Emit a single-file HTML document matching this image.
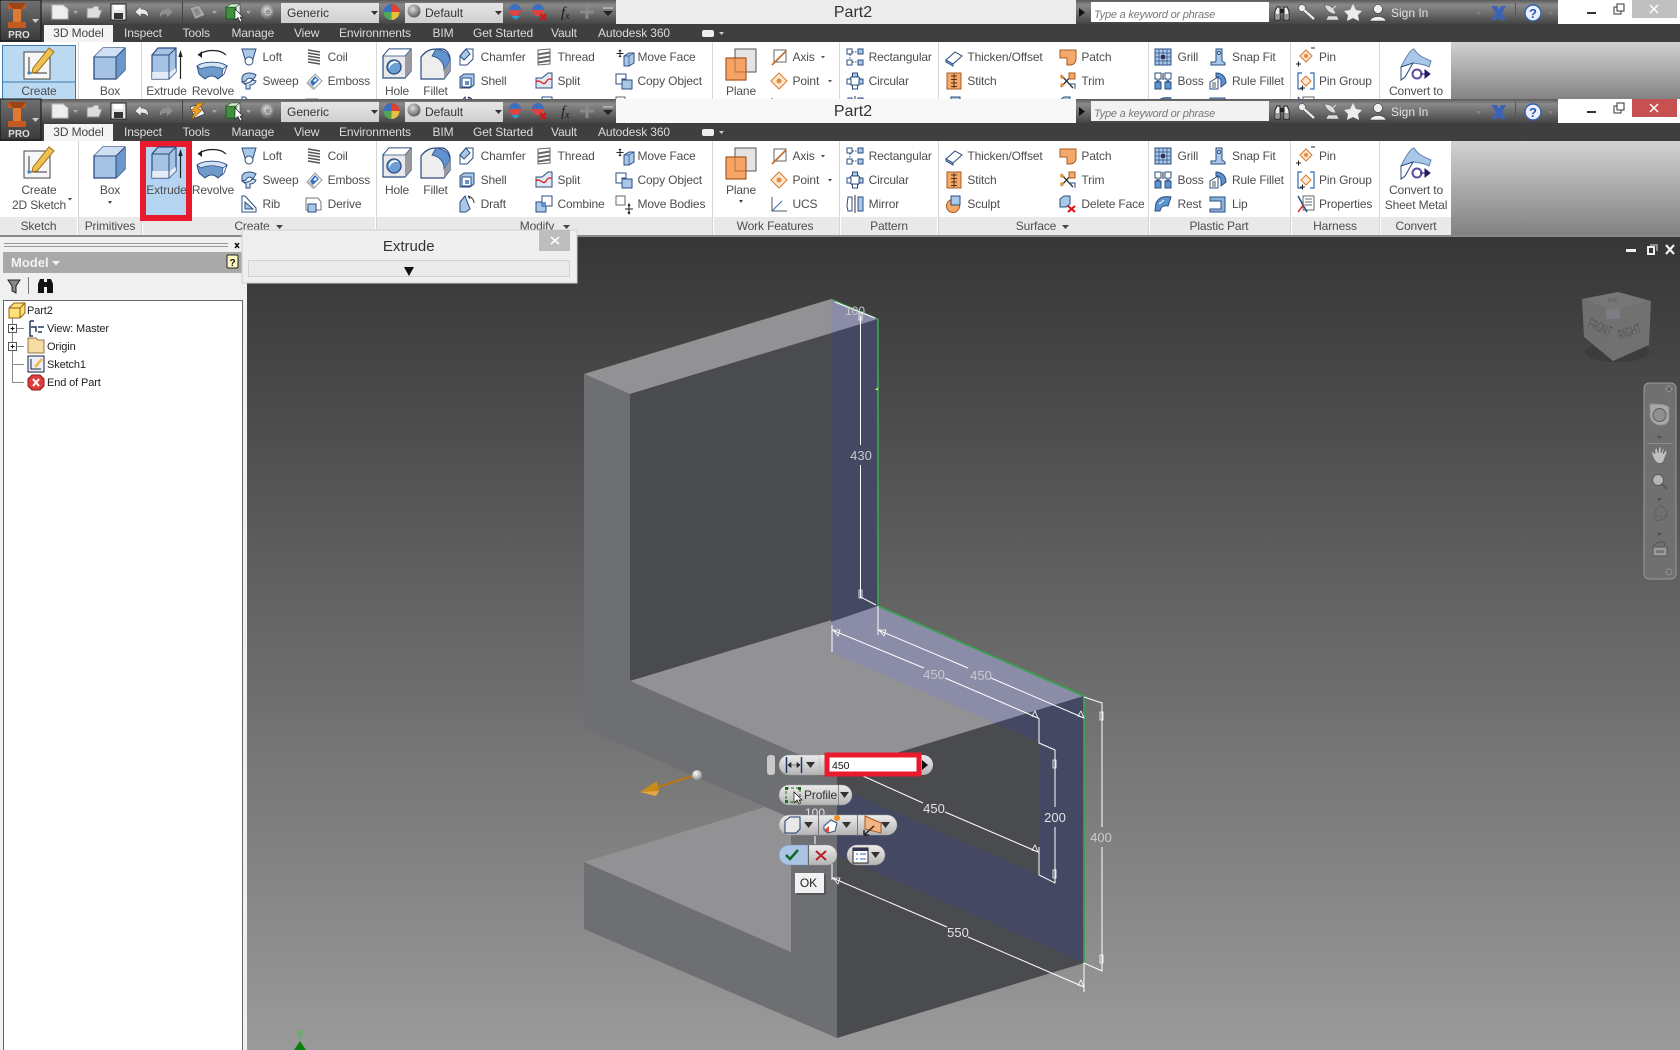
<!DOCTYPE html>
<html><head><meta charset="utf-8"><title>Part2</title>
<style>
html,body{margin:0;padding:0;background:#fff;overflow:hidden}
svg{display:block;font-family:"Liberation Sans",sans-serif}
.r text{font-size:12px;fill:#4d4d4d;letter-spacing:-.14px}
.c text{text-anchor:middle}
.tab text{font-size:12px;fill:#dcdcdc;letter-spacing:-.12px}
.dim text{font-size:13px;fill:#c9c9cf;text-anchor:middle}
.tree text{font-size:11px;fill:#222;letter-spacing:-.12px}
</style></head><body>
<svg xmlns="http://www.w3.org/2000/svg" width="1680" height="1050" viewBox="0 0 1680 1050">
<defs>
<linearGradient id="tbg" x1="0" y1="0" x2="0" y2="1"><stop offset="0" stop-color="#5a5a5a"/><stop offset=".2" stop-color="#8a8a8a"/><stop offset=".6" stop-color="#686868"/><stop offset="1" stop-color="#444"/></linearGradient>
<linearGradient id="rg" x1="0" y1="0" x2="0" y2="1"><stop offset="0" stop-color="#d2d2d2"/><stop offset="1" stop-color="#828282"/></linearGradient>
<linearGradient id="vp" x1="0" y1="0" x2="0" y2="1"><stop offset="0" stop-color="#363636"/><stop offset="1" stop-color="#9a9a9a"/></linearGradient>
<linearGradient id="pill" x1="0" y1="0" x2="0" y2="1"><stop offset="0" stop-color="#ececec"/><stop offset="1" stop-color="#b4b4b4"/></linearGradient>
<linearGradient id="cb" x1="0" y1="0" x2="0" y2="1"><stop offset="0" stop-color="#e6e6e6"/><stop offset="1" stop-color="#cfcfcf"/></linearGradient>
<linearGradient id="logo" x1="0" y1="0" x2="0" y2="1"><stop offset="0" stop-color="#707070"/><stop offset="1" stop-color="#3a3a3a"/></linearGradient>
<radialGradient id="ball" cx=".4" cy=".35" r=".7"><stop offset="0" stop-color="#fff"/><stop offset="1" stop-color="#888"/></radialGradient>
<radialGradient id="sph" cx=".4" cy=".35" r=".7"><stop offset="0" stop-color="#ddd"/><stop offset="1" stop-color="#555"/></radialGradient>

<g id="loft"><path d="M-7-8H7L4 2H-4Z" fill="#a9c8e8" stroke="#2b4c80"/><circle cy="4" r="4" fill="#fff" stroke="#2b4c80"/></g>
<g id="sweep"><path d="M-7-4C-5-9 3-9 7-6L4-1C2-4-2-3-3 0L-7 1Z" fill="#a9c8e8" stroke="#2b4c80"/><path d="M-7 1C-3 4 2 1 3-1L7 0C6 3 3 4 1 4V8H-3V4Z" fill="#cfe0f2" stroke="#2b4c80"/></g>
<g id="coil" fill="none" stroke="#555" stroke-width="1.600"><path d="M-6-7 6-5M-6-4 6-2M-6-1 6 1M-6 2 6 4M-6 5 6 7"/></g>
<g id="emboss"><path d="M-7 2 1-7 8 0 0 8Z" fill="#fff" stroke="#999"/><path d="M-4 1 1-5 5-1-1 5Z" fill="#2f6fc0"/><path d="M-1 0 2-3 3-1 1 1Z" fill="#fff"/><path d="M-7 3-1 9 2 8-5 1Z" fill="#b5b5b5"/></g>
<g id="chamfer"><path d="M-7-1-1-8H6V2L0 8H-7Z" fill="#fff" stroke="#2b4c80"/><path d="M-7-1-1-8 3-3-3 3Z" fill="#a9c8e8" stroke="#2b4c80"/></g>
<g id="shell"><path d="M-7-4-3-7H7V4L3 7H-7Z" fill="#a9c8e8" stroke="#2b4c80"/><rect x="-5" y="-3" width="9" height="9" fill="#fff" stroke="#2b4c80"/><rect x="-2" y="0" width="4" height="4" fill="#5e8fc6"/></g>
<g id="thread" fill="#fff" stroke="#666"><path d="M-6-7 6-8V-5L-6-3ZM-6-2 6-4V-1L-6 1ZM-6 2 6 0V3L-6 5ZM-6 6 6 4V7L-6 8Z"/></g>
<g id="split"><path d="M-8-3-2-3 4-8H8V7H-8Z" fill="#dfe8f2" stroke="#2b4c80"/><path d="M-8 1C-4-3-1 6 2 1S6-1 8-2" fill="none" stroke="#d22" stroke-width="1.300"/></g>
<g id="moveface"><path d="M-2-2 3-5H8V5L3 8H-2Z" fill="#a9c8e8" stroke="#2b4c80"/><path d="M-2-2H3V8M3-2 8-5" fill="none" stroke="#2b4c80" stroke-width=".7"/><path d="M-6-8V-1M-9.500-4.500H-2.500M-6-8-7.200-6.800M-6-8-4.800-6.800M-6-1-7.200-2.200M-6-1-4.800-2.200" stroke="#222" fill="none" stroke-width=".9"/></g>
<g id="copyobj"><path d="M-8-7H2V-2H-2V3H-8Z" fill="#fff" stroke="#2b4c80"/><rect x="-2" y="-1" width="10" height="9" fill="#a9c8e8" stroke="#2b4c80"/></g>
<g id="axis"><path d="M-5-7H7V5H-5Z" fill="#fff" stroke="#666"/><path d="M-7 8 7-6" stroke="#c46a2a" stroke-width="1.600"/></g>
<g id="point"><path d="M0-8 8 0 0 8-8 0Z" fill="#fde7d2" stroke="#d8792a"/><circle r="2.500" fill="#e68a3c"/></g>
<g id="rectp" fill="#fff" stroke="#2b4c80"><path d="M-5-5H5M-5 5H5M-5-5V5" fill="none" stroke-dasharray="1.500 1"/><rect x="-8" y="-8" width="5" height="5"/><rect x="3" y="-8" width="5" height="5" fill="#a9c8e8"/><rect x="-8" y="3" width="5" height="5"/><rect x="3" y="3" width="5" height="5" fill="#a9c8e8"/></g>
<g id="circ" fill="#a9c8e8" stroke="#2b4c80"><circle r="5.500" fill="none"/><rect x="-2.500" y="-8" width="5" height="4"/><rect x="-8" y="-2" width="4" height="5" fill="#fff"/><rect x="4" y="-2" width="4" height="5"/><rect x="-2.500" y="4" width="5" height="4" fill="#fff"/></g>
<g id="thicken"><path d="M-8 2 1-6 8-2-1 6Z" fill="#fff" stroke="#2b4c80"/><path d="M-8 2-1 6V8L-8 4Z" fill="#8cb2da" stroke="#2b4c80"/></g>
<g id="stitch"><rect x="-7" y="-8" width="14" height="16" fill="#f3a96a" stroke="#a85a20"/><path d="M0-7V7M-3-5H3M-3-1.500H3M-3 2H3M-3 5.500H3" stroke="#5a3410"/></g>
<g id="patch"><path d="M-8-7H8V2C8 6 5 8 2 8H-1V1H-8Z" fill="#f3a96a" stroke="#a85a20"/></g>
<g id="trim"><path d="M-7 6 5-7M-7-6 5 7" stroke="#333" stroke-width="1.300"/><rect x="1" y="-8" width="6" height="6" fill="#f3a96a" stroke="#a85a20"/><circle cx="-6" cy="-4" r="1.800" fill="#e8902a"/><circle cx="-6" cy="4" r="1.800" fill="#e8902a"/><path d="M1 3H7V8" fill="none" stroke="#2b4c80"/></g>
<g id="grill"><rect x="-8" y="-8" width="16" height="16" fill="#a9c8e8" stroke="#2b4c80"/><path d="M-4-8V8M0-8V8M4-8V8M-8-4H8M-8 0H8M-8 4H8" stroke="#2b4c80" stroke-width=".7"/><rect x="-2" y="-2" width="4" height="4" fill="#335"/></g>
<g id="boss"><path d="M-8 1H-2V8H-8ZM2 1H8V8H2Z" fill="#5d94d0" stroke="#2b4c80"/><path d="M-8-8H-2V-2H-4V0H-6V-2H-8ZM2-8H8V-2H6V0H4V-2H2Z" fill="#fff" stroke="#2b4c80"/><path d="M0-8V-1" stroke="#222"/></g>
<g id="snap"><path d="M-2-8H4V4L7 6V8H-7V5H-3C-2 5-2 4-2 3Z" fill="#a9c8e8" stroke="#2b4c80"/><circle cx="1" cy="-4" r="1.500" fill="#fff" stroke="#2b4c80"/></g>
<g id="rulefillet"><path d="M-2-8C4-8 8-4 8 2L3 6V0C3-2 1-4-2-4Z" fill="#5d94d0" stroke="#2b4c80"/><path d="M-8 1 0-4V8H-8Z" fill="#fff" stroke="#2b4c80"/><path d="M-6 2H-2M-6 4H-2M-6 6H-2" stroke="#555"/></g>
<g id="pin"><path d="M0-6 6 0 0 6-6 0Z" fill="#fde7d2" stroke="#d8792a"/><circle r="2" fill="#e68a3c"/><path d="M-10 8H-5M-7.500 5.500V10.500M5-8H9" stroke="#222"/></g>
<g id="pingroup"><path d="M0-5 5 0 0 5-5 0Z" fill="#fde7d2" stroke="#d8792a"/><path d="M-4-8H-8V8H-4M4-8H8V8H4" fill="none" stroke="#2b6cb0" stroke-width="1.200"/><path d="M-6 7H-1M-3.500 4.500V9.500" stroke="#222"/></g>
<g id="rib"><path d="M-7-8-4-8 7 4V8H-7Z" fill="#fff" stroke="#2b4c80"/><path d="M-4-2 4 5H-4Z" fill="#a9c8e8" stroke="#2b4c80"/></g>
<g id="derive"><path d="M-8-6H4L7-2V6H-8Z" fill="#fff" stroke="#777"/><rect x="-6" y="0" width="8" height="8" fill="#a9c8e8" stroke="#2b4c80"/></g>
<g id="draft"><path d="M-7-2-2-8 3 5-1 8H-7Z" fill="#a9c8e8" stroke="#2b4c80"/><path d="M1-8C5-7 7-4 7-1M1-8 3-5" fill="none" stroke="#333"/></g>
<g id="combine"><rect x="-8" y="-2" width="10" height="10" fill="#a9c8e8" stroke="#2b4c80"/><rect x="-2" y="-8" width="10" height="10" fill="#fff" stroke="#2b4c80"/><rect x="-2" y="-2" width="4" height="4" fill="#5d94d0"/></g>
<g id="movebodies"><rect x="-8" y="-8" width="9" height="9" fill="#fff" stroke="#666"/><path d="M5 1V9M1 5H9" stroke="#222"/><path d="M4 2 5 0 6 2M4 8 5 10 6 8" fill="none" stroke="#222"/></g>
<g id="ucs" fill="none" stroke="#555"><path d="M-7-7V7H8"/><path d="M-7 7 3-3" stroke="#2b6cb0"/></g>
<g id="mirror"><path d="M-7-7H-3V7H-7L-8 2Z" fill="#fff" stroke="#2b4c80"/><path d="M0-9V9" stroke="#333"/><path d="M8-7H3V7H8V-1Z" fill="#a9c8e8" stroke="#2b4c80"/></g>
<g id="sculpt"><circle cx="-1" cy="2" r="6.500" fill="#f3a96a" stroke="#a85a20"/><path d="M-3-8H6V1H-3Z" fill="#a9c8e8" stroke="#2b4c80"/></g>
<g id="delface"><path d="M-8-5-4-8H2V0L-2 3H-8Z" fill="#a9c8e8" stroke="#2b4c80"/><path d="M0 2 7 8M7 2 0 8" stroke="#d11" stroke-width="2"/></g>
<g id="rest"><path d="M-7-1C-4-7 2-8 8-7L5 2C0 1-2 3-3 7H-8Z" fill="#5d94d0" stroke="#2b4c80"/><path d="M-4 0 1-4" stroke="#fff"/></g>
<g id="lip"><path d="M-8-7H7V8H-8V5H3V-3H-8Z" fill="#8cb2da" stroke="#2b4c80"/></g>
<g id="props"><rect x="-3" y="-8" width="11" height="14" fill="#fff" stroke="#666"/><path d="M-1-5H6M-1-2H6M-1 1H6" stroke="#667"/><path d="M-8-8 1 8" stroke="#2b4c80" stroke-width="1.500"/><path d="M-8 8-2 0" stroke="#d33" stroke-width="1.500"/></g>

<g id="big">
 <g transform="translate(24,48)"><rect x="0" y="4" width="26" height="27" fill="#f7f7f7" stroke="#444"/><path d="M5 9V25H23" fill="none" stroke="#333"/><rect x="3.500" y="23.500" width="3" height="3" fill="#3a8ad0"/><path d="M9 20 25 0 30 4 13 24 8 25Z" fill="#eec251" stroke="#a8701a"/></g>
 <g transform="translate(94,48)"><path d="M0 9 9 0H31V22L22 31H0Z" fill="#a6c3e4" stroke="#2b4c80" stroke-width="1.300"/><path d="M22 9 31 0V22L22 31Z" fill="#6c97c8"/><path d="M0 9 9 0H31L22 9Z" fill="#cfe0f2"/><path d="M0 9H22V31M22 9 31 0" fill="none" stroke="#2b4c80"/></g>
 <g transform="translate(152,48)"><path d="M0 7 6 0H24V24L17 31H0Z" fill="#a6c3e4" stroke="#2b4c80" stroke-width="1.200"/><path d="M0 24H18L24 20V24L17 31H0Z" fill="#fff" opacity=".7"/><path d="M0 7H17V31M17 7 24 0" fill="none" stroke="#2b4c80"/><path d="M28.500 31V7" stroke="#222" stroke-width="1.200"/><path d="M26.300 9 28.500 2 30.700 9Z" fill="#222"/></g>
 <g transform="translate(196,49)"><path d="M2 6C10 0 24 0 30 6" fill="none" stroke="#222" stroke-width="1.200"/><path d="M2 6 6 2 6 9Z" fill="#222"/><path d="M1 17C8 12 24 12 31 17L28 25 22 30C18 26 13 26 9 30L3 25Z" fill="#6f9bcc" stroke="#2b4c80"/><path d="M1 17C8 12 24 12 31 17L27 20C20 17 11 17 5 20Z" fill="#d3e3f4" stroke="#2b4c80" stroke-width=".7"/><path d="M27 20 31 17 28 25 26 27Z" fill="#fff" stroke="#2b4c80" stroke-width=".7"/></g>
 <g transform="translate(383,49)"><path d="M0 7 6 0H28V22L22 29H0Z" fill="#e9e9ec" stroke="#2b4c80" stroke-width="1.200"/><path d="M22 7 28 0V22L22 29Z" fill="#9a9aa0"/><path d="M0 7 6 0H28L22 7Z" fill="#fff" stroke="#2b4c80" stroke-width=".7"/><circle cx="11" cy="18" r="7" fill="#6d9ed4" stroke="#2b4c80" stroke-width="1.300"/><path d="M6 20A6 6 0 0 1 16 14 8 8 0 0 0 6 20Z" fill="#fff"/></g>
 <g transform="translate(421,49)"><path d="M0 8C6 0 12 0 16 0H22C26 1 29 6 29 10V22L23 30H0Z" fill="#eee" stroke="#2b4c80" stroke-width="1.200"/><path d="M15 0C24 1 29 6 29 12L23 21C23 14 19 9 11 7Z" fill="#5f92cf" stroke="#2b4c80" stroke-width=".8"/><path d="M23 21 29 12V22L23 30Z" fill="#9a9aa0"/></g>
 <g transform="translate(726,49)"><path d="M9 0H30V23H9Z" fill="#e4e4e6" stroke="#555"/><path d="M0 9H20V31H0Z" fill="#f5a468" stroke="#a85a20" stroke-width="1.200"/><path d="M9 9V23H20" fill="none" stroke="#a85a20" stroke-width=".7"/></g>
 <g transform="translate(1401,49)"><path d="M0 18C5 8 10 0 13 0 18 8 24 9 30 12L28 18C24 15 18 15 12 14L9 19 4 28 0 31Z" fill="#a9c8e8" stroke="#5d80ad"/><path d="M0 18 12 14 4 28 0 31Z" fill="#fff" stroke="#2b4c80"/><circle cx="16" cy="25" r="4.500" fill="none" stroke="#5a4ca0" stroke-width="2"/><path d="M19 25H26M24 21 29 25 24 29Z" fill="#221a60" stroke="#221a60"/></g>
 <use href="#loft" x="249" y="57"/><use href="#coil" x="314" y="57"/><use href="#chamfer" x="467" y="57"/><use href="#thread" x="544" y="57"/><use href="#moveface" x="626" y="58"/><use href="#axis" x="779" y="57"/><use href="#rectp" x="855" y="57"/><use href="#thicken" x="954" y="58"/><use href="#patch" x="1068" y="57"/><use href="#grill" x="1163" y="57"/><use href="#snap" x="1218" y="57"/><use href="#pin" x="1306" y="56"/>
 <use href="#sweep" x="249" y="81"/><use href="#emboss" x="314" y="81"/><use href="#shell" x="467" y="81"/><use href="#split" x="544" y="81"/><use href="#copyobj" x="624" y="81"/><use href="#point" x="779" y="81"/><use href="#circ" x="855" y="81"/><use href="#stitch" x="954" y="81"/><use href="#trim" x="1068" y="81"/><use href="#boss" x="1163" y="81"/><use href="#rulefillet" x="1218" y="81"/><use href="#pingroup" x="1306" y="81"/>
 <use href="#rib" x="249" y="105"/><use href="#derive" x="314" y="105"/><use href="#draft" x="467" y="105"/><use href="#combine" x="544" y="105"/><use href="#movebodies" x="624" y="105"/><use href="#ucs" x="779" y="105"/><use href="#mirror" x="855" y="105"/><use href="#sculpt" x="954" y="105"/><use href="#delface" x="1068" y="105"/><use href="#rest" x="1163" y="105"/><use href="#lip" x="1218" y="105"/><use href="#props" x="1306" y="105"/>
</g>

<g id="qat">
 <rect x="0" y="0" width="41" height="41" fill="url(#logo)" stroke="#111"/>
 <path d="M8 3H26V9H21V22H26V28H8V22H13V9H8Z" fill="#c35a20"/><path d="M13 9H21V22H13Z" fill="#e07a30"/><path d="M8 3 13 9H21L26 3Z" fill="#9c4416"/>
 <path d="M32 19H39L35.500 23Z" fill="#ccc"/>
 <path d="M52 5H63L68 9V19H52Z" fill="#eee" stroke="#bbb"/><path d="M73 11H78L75.500 14Z" fill="#aaa"/>
 <path d="M87 18V8H92L94 6H99V10H102L99 18Z" fill="#ddd" stroke="#888"/>
 <rect x="111" y="4" width="15" height="16" fill="#e6e6e6" stroke="#222"/><rect x="114" y="13" width="9" height="6" fill="#333"/><rect x="114" y="5" width="9" height="5" fill="#fff"/>
 <path d="M135 12 141 6V9C146 9 149 12 148 17 146 14 144 14 141 14V17Z" fill="#e8e8e8" stroke="#444" stroke-width=".5"/>
 <path d="M173 12 167 6V9C162 9 159 12 160 17 162 14 164 14 167 14V17Z" fill="#8f8f8f"/>
 <path d="M182.500 1V23" stroke="#444"/>
 <path d="M212 11H217L214.500 14Z" fill="#aaa"/>
 <path d="M226 7 231 4H240V16L236 19H226Z" fill="#eee" stroke="#444" stroke-width=".6"/><path d="M226 7H236V19H226Z" fill="#3e8f3e" stroke="#1e5a1e"/><path d="M226 7 231 4H240L236 7Z" fill="#dfe8df" stroke="#1e5a1e" stroke-width=".6"/><path d="M235 9V20L238 17.500 240 22 242 21 240 17H243Z" fill="#fff" stroke="#111" stroke-width=".6"/>
 <path d="M246 11H251L248.500 14Z" fill="#aaa"/>
 <circle cx="268" cy="12" r="7.500" fill="url(#sph)"/><circle cx="268" cy="12" r="3" fill="#999" stroke="#eee" stroke-dasharray="1 1"/>
 <rect x="281" y="3" width="98" height="20" fill="url(#cb)"/><path d="M371 11H378L374.500 15Z" fill="#333"/>
 <circle cx="391.500" cy="12" r="8" fill="#3a6fc0"/><path d="M391.500 12V4A8 8 0 0 1 399.500 12Z" fill="#e04030"/><path d="M391.500 12H399.500A8 8 0 0 1 391.500 20Z" fill="#e8c040"/><path d="M391.500 12V20A8 8 0 0 1 383.500 12Z" fill="#50a850"/>
 <rect x="405" y="3" width="98" height="20" fill="url(#cb)"/><circle cx="414" cy="11" r="6.500" fill="url(#sph)"/><path d="M495 11H502L498.500 15Z" fill="#333"/>
 <circle cx="515" cy="10" r="6" fill="#d44"/><path d="M509 10A6 6 0 0 1 521 10Z" fill="#3a70c0"/><path d="M511 16H520L515.500 20Z" fill="#2a9ad8"/>
 <circle cx="538" cy="10" r="6" fill="#d44"/><path d="M532 10A6 6 0 0 1 544 10Z" fill="#3a70c0"/><path d="M540 14 546 20M546 14 540 20" stroke="#d11" stroke-width="2"/>
 <path d="M587 5V19M580 12H594" stroke="#8a8a8a" stroke-width="3"/>
 <path d="M603 8H613" stroke="#ddd"/><path d="M603 11H613L608 16Z" fill="#222"/>
 <path d="M1079 8V17L1085 12.500Z" fill="#111"/>
 <path d="M1275 20V11L1277 7H1280V20ZM1284 20V7H1287L1289 11V20Z" fill="#eee" stroke="#222"/><rect x="1280" y="9" width="4" height="4" fill="#222"/><rect x="1276" y="14" width="3" height="5" fill="#999"/><rect x="1285" y="14" width="3" height="5" fill="#999"/>
 <circle cx="1302" cy="8" r="3.500" fill="#eee" stroke="#555" stroke-width=".7"/><path d="M1304 10 1314 19" stroke="#555" stroke-width="3.500"/><path d="M1304 10 1314 19" stroke="#eee" stroke-width="2.200"/>
 <path d="M1324 5C1327 12 1331 14 1336 14 1334 7 1330 5 1324 5ZM1328 16H1337L1339 20H1326Z" fill="#ddd" stroke="#555" stroke-width=".6"/><path d="M1330 11 1336 6" stroke="#ddd"/>
 <path d="M1353 4 1356 10 1362 11 1358 15 1359 21 1353 18 1347 21 1348 15 1344 11 1350 10Z" fill="#ececec"/>
 <circle cx="1378" cy="9" r="4.500" fill="#eee" stroke="#333" stroke-width=".6"/><path d="M1370 21C1371 15 1385 15 1386 21Z" fill="#eee" stroke="#333" stroke-width=".6"/>
 <path d="M1476 12H1481L1478.500 15Z" fill="#888"/>
 <path d="M1491 6H1497L1499 10 1501 6H1506L1502 13 1506 20H1500L1499 16 1496 20H1491L1496 13Z" fill="#3a62b8"/>
 <path d="M1515.500 3V21" stroke="#555"/>
 <circle cx="1533" cy="13" r="8" fill="#eef" stroke="#3366aa" stroke-width="1.500"/>
 <path d="M1548 12H1553L1550.500 15Z" fill="#888"/>
 <rect x="1587" y="12" width="9" height="2" fill="#333"/>
 <rect x="1614" y="7" width="7" height="7" fill="none" stroke="#333"/><rect x="1617" y="4" width="7" height="7" fill="#fff" stroke="#333"/>
</g>
</defs>

<rect width="1680" height="1050" fill="#f0f0f0"/>

<!-- back window -->
<rect x="0" y="0" width="1680" height="24" fill="#fff"/>
<rect x="0" y="0" width="616" height="24" fill="url(#tbg)"/>
<rect x="616" y="0" width="460" height="24" fill="#ececec"/>
<rect x="1076" y="0" width="482" height="24" fill="url(#tbg)"/>
<rect x="0" y="24" width="1680" height="18" fill="#3f3f3f"/>
<rect x="44" y="25" width="69" height="17" fill="#f4f4f4"/>
<rect x="0" y="42" width="1451" height="58" fill="#fff"/>
<rect x="1451" y="42" width="229" height="58" fill="url(#rg)"/>
<rect x="1091" y="2" width="178" height="20" fill="#fff"/>
<rect x="1632" y="0" width="45" height="18" fill="#c0c0c0"/>
<path d="M1650 5 1658 13M1658 5 1650 13" stroke="#fff" stroke-width="1.500"/>
<rect x="2.500" y="45.500" width="73" height="55" fill="#bcd9f2" stroke="#3a7ab0"/>
<path d="M3 82H75" stroke="#3a7ab0"/>
<g stroke="#d8d8d8"><path d="M141.500 42V99M376.500 42V99M712.500 42V99M839.500 42V99M938.500 42V99M1148.500 42V99M1290.500 42V99M1379.500 42V99M78.500 42V99"/></g>
<use href="#big"/>
<use href="#qat"/>
<path d="M190 8 199 5 205 15 195 19Z" fill="#a8a8a8" stroke="#666" stroke-width=".6"/><path d="M193 10 198 8 201 14 196 16Z" fill="#8a8a8a"/>
<text x="19" y="38" font-size="10" font-weight="700" fill="#ddd" text-anchor="middle">PRO</text>
<g font-size="12" fill="#333"><text x="287" y="17">Generic</text><text x="425" y="17">Default</text></g>
<text x="561" y="17" font-size="15" font-style="italic" font-family="Liberation Serif" fill="#1c1c1c">f<tspan font-size="10" dy="2">x</tspan></text>
<text x="853" y="17" font-size="16" fill="#333" text-anchor="middle">Part2</text>
<text x="1094" y="18" font-size="11" font-style="italic" fill="#777" letter-spacing="-.22">Type a keyword or phrase</text>
<text x="1391" y="17" font-size="12" fill="#e4e4e4">Sign In</text>
<text x="1533" y="18" font-size="13" font-weight="700" fill="#2a5aa8" text-anchor="middle">?</text>
<g class="tab">
 <text x="78.500" y="37" text-anchor="middle" style="fill:#444">3D Model</text><text x="124" y="37">Inspect</text><text x="182.500" y="37">Tools</text><text x="231.500" y="37">Manage</text><text x="294" y="37">View</text><text x="339" y="37">Environments</text><text x="432.500" y="37">BIM</text><text x="473" y="37">Get Started</text><text x="551" y="37">Vault</text><text x="598" y="37">Autodesk 360</text>
</g>
<rect x="702" y="30" width="12" height="7" rx="2" fill="#eee"/><path d="M719 32H724L721.500 35Z" fill="#ccc"/>
<g class="r">
 <text x="262.500" y="61">Loft</text><text x="327.600" y="61">Coil</text><text x="480.600" y="61">Chamfer</text><text x="557.500" y="61">Thread</text><text x="637.500" y="61">Move Face</text><text x="792.500" y="61">Axis</text><text x="868.600" y="61">Rectangular</text><text x="967.400" y="61">Thicken/Offset</text><text x="1081.400" y="61">Patch</text><text x="1177.500" y="61">Grill</text><text x="1232" y="61">Snap Fit</text><text x="1319" y="61">Pin</text>
 <text x="262.500" y="85">Sweep</text><text x="327.600" y="85">Emboss</text><text x="480.600" y="85">Shell</text><text x="557.500" y="85">Split</text><text x="637.500" y="85">Copy Object</text><text x="792.500" y="85">Point</text><text x="868.600" y="85">Circular</text><text x="967.400" y="85">Stitch</text><text x="1081.400" y="85">Trim</text><text x="1177.500" y="85">Boss</text><text x="1232" y="85">Rule Fillet</text><text x="1319" y="85">Pin Group</text>
</g>
<g class="r c"><text x="39" y="95">Create</text><text x="110" y="95">Box</text><text x="166.500" y="95">Extrude</text><text x="213" y="95">Revolve</text><text x="397" y="95">Hole</text><text x="435.500" y="95">Fillet</text><text x="741" y="95">Plane</text><text x="1416" y="95">Convert to</text></g>
<path d="M821 56H825L823 58.500ZM828 80H832L830 82.500Z" fill="#555"/>

<!-- front window -->
<rect x="0" y="99" width="1680" height="24" fill="#fff"/>
<rect x="0" y="99" width="616" height="24" fill="url(#tbg)"/>
<rect x="616" y="99" width="460" height="24" fill="#f8f8f8"/>
<rect x="1076" y="99" width="482" height="24" fill="url(#tbg)"/>
<rect x="0" y="123" width="1680" height="18" fill="#3f3f3f"/>
<rect x="44" y="124" width="69" height="17" fill="#f4f4f4"/>
<rect x="0" y="141" width="1451" height="94" fill="#fff"/>
<rect x="1451" y="141" width="229" height="94" fill="url(#rg)"/>
<rect x="1091" y="101" width="178" height="20" fill="#f2f2f2"/>
<rect x="1632" y="99" width="45" height="18" fill="#c75050"/>
<path d="M1650 104 1658 112M1658 104 1650 112" stroke="#fff" stroke-width="1.500"/>
<rect x="0" y="217" width="1451" height="18" fill="#e9e9e9"/>
<g stroke="#d4d4d4"><path d="M78.500 141V235M141.500 141V235M376.500 141V235M712.500 141V235M839.500 141V235M938.500 141V235M1148.500 141V235M1290.500 141V235M1379.500 141V235"/></g>
<g stroke="#fff"><path d="M77.500 217V235M142.500 217V235M375.500 217V235M713.500 217V235M840.500 217V235M937.500 217V235M1149.500 217V235M1291.500 217V235M1380.500 217V235"/></g>
<rect x="143" y="144" width="46" height="74" fill="#b5d4f1" stroke="#e81a2c" stroke-width="6"/>
<g transform="translate(0,99)"><use href="#big"/><use href="#qat"/></g>
<path d="M190 107 199 104 205 114 195 118Z" fill="#f4f4f4" stroke="#333" stroke-width=".7"/><path d="M198 103 204 103 198 109 202 110 191 120 195 112 191 111Z" fill="#f0a020" stroke="#8a5a10" stroke-width=".6"/>
<text x="19" y="137" font-size="10" font-weight="700" fill="#ddd" text-anchor="middle">PRO</text>
<g font-size="12" fill="#333"><text x="287" y="116">Generic</text><text x="425" y="116">Default</text></g>
<text x="561" y="116" font-size="15" font-style="italic" font-family="Liberation Serif" fill="#1c1c1c">f<tspan font-size="10" dy="2">x</tspan></text>
<text x="853" y="116" font-size="16" fill="#333" text-anchor="middle">Part2</text>
<text x="1094" y="117" font-size="11" font-style="italic" fill="#777" letter-spacing="-.22">Type a keyword or phrase</text>
<text x="1391" y="116" font-size="12" fill="#e4e4e4">Sign In</text>
<text x="1533" y="117" font-size="13" font-weight="700" fill="#2a5aa8" text-anchor="middle">?</text>
<g class="tab">
 <text x="78.500" y="136" text-anchor="middle" style="fill:#444">3D Model</text><text x="124" y="136">Inspect</text><text x="182.500" y="136">Tools</text><text x="231.500" y="136">Manage</text><text x="294" y="136">View</text><text x="339" y="136">Environments</text><text x="432.500" y="136">BIM</text><text x="473" y="136">Get Started</text><text x="551" y="136">Vault</text><text x="598" y="136">Autodesk 360</text>
</g>
<rect x="702" y="129" width="12" height="7" rx="2" fill="#eee"/><path d="M719 131H724L721.500 134Z" fill="#ccc"/>
<g class="r">
 <text x="262.500" y="160">Loft</text><text x="327.600" y="160">Coil</text><text x="480.600" y="160">Chamfer</text><text x="557.500" y="160">Thread</text><text x="637.500" y="160">Move Face</text><text x="792.500" y="160">Axis</text><text x="868.600" y="160">Rectangular</text><text x="967.400" y="160">Thicken/Offset</text><text x="1081.400" y="160">Patch</text><text x="1177.500" y="160">Grill</text><text x="1232" y="160">Snap Fit</text><text x="1319" y="160">Pin</text>
 <text x="262.500" y="184">Sweep</text><text x="327.600" y="184">Emboss</text><text x="480.600" y="184">Shell</text><text x="557.500" y="184">Split</text><text x="637.500" y="184">Copy Object</text><text x="792.500" y="184">Point</text><text x="868.600" y="184">Circular</text><text x="967.400" y="184">Stitch</text><text x="1081.400" y="184">Trim</text><text x="1177.500" y="184">Boss</text><text x="1232" y="184">Rule Fillet</text><text x="1319" y="184">Pin Group</text>
 <text x="262.500" y="208">Rib</text><text x="327.600" y="208">Derive</text><text x="480.600" y="208">Draft</text><text x="557.500" y="208">Combine</text><text x="637.500" y="208">Move Bodies</text><text x="792.500" y="208">UCS</text><text x="868.600" y="208">Mirror</text><text x="967.400" y="208">Sculpt</text><text x="1081.400" y="208">Delete Face</text><text x="1177.500" y="208">Rest</text><text x="1232" y="208">Lip</text><text x="1319" y="208">Properties</text>
</g>
<g class="r c">
 <text x="39" y="194">Create</text><text x="39" y="209">2D Sketch</text><text x="110" y="194">Box</text><text x="166.500" y="194">Extrude</text><text x="213" y="194">Revolve</text><text x="397" y="194">Hole</text><text x="435.500" y="194">Fillet</text><text x="741" y="194">Plane</text><text x="1416" y="194">Convert to</text><text x="1416" y="209">Sheet Metal</text>
 <text x="38.500" y="230">Sketch</text><text x="110" y="230">Primitives</text><text x="252" y="230">Create</text><text x="537" y="230">Modify</text><text x="775" y="230">Work Features</text><text x="889" y="230">Pattern</text><text x="1036" y="230">Surface</text><text x="1219" y="230">Plastic Part</text><text x="1335" y="230">Harness</text><text x="1416" y="230">Convert</text>
</g>
<path d="M276 225H283L279.500 229ZM563 225H570L566.500 229ZM1062 225H1069L1065.500 229ZM68 198H72L70 200.500ZM108 201H112L110 204ZM739 200H743L741 203ZM821 155H825L823 157.500ZM828 179H832L830 181.500Z" fill="#444"/>

<!-- viewport -->
<rect x="0" y="235" width="1680" height="2" fill="#8a8a8a"/>
<rect x="247" y="237" width="1433" height="813" fill="url(#vp)"/>

<polygon points="584,374 630,394 630,681 837,771 837,1038 584,929 584,862 791,952 791,818 584,728" fill="#6e6f72"/>
<polygon points="584,374 831,299 878,319 630,394" fill="#929295"/>
<polygon points="630,394 878,319 878,606 630,681" fill="#4a4b4e"/>
<polygon points="630,681 878,606 1084,696 837,771" fill="#929295"/>
<polygon points="584,862 765,807 791,818 791,952" fill="#929295"/>
<polygon points="837,771 1084,696 1084,963 837,1038" fill="#4a4b4e"/>
<polygon points="831,299 878,319 831,333" fill="#8b8da8"/>
<polygon points="831,333 878,319 878,606 831,622" fill="#444862"/>
<polygon points="831,622 878,606 1084,696 995,723 831,652" fill="#8b8da8"/>
<polygon points="837,787 1039,875 1039,743 995,723 1084,696 1084,963 837,855" fill="#444862"/>
<path d="M878 319V606L1084 696V963" fill="none" stroke="#3aa050" stroke-width="1.800"/>
<path d="M831 299 878 319" stroke="#3aa050"/>
<path d="M875 390H878V387Z" fill="#e8e050"/>

<g stroke="#fff" fill="none" stroke-width="1">
 <path d="M835 302 875 318"/>
 <path d="M860.500 316V445M860.500 465V597L876 605"/>
 <path d="M832 625V652M878 606V635"/>
 <path d="M832 630 924 668M945 678 1038 718M878 630 968 668M991 678 1084 718"/>
 <path d="M1039 718V743L1055 750V807M1055 827V883L1039 875V847"/>
 <path d="M863 776 923 803M945 812 1038 852"/>
 <path d="M1084 697 1102 703V827M1102 847V971L1084 963V992"/>
 <path d="M832.500 878 947 927M968 937 1084 987"/>
 <path d="M832 864V880M815 836V844"/>
</g>
<g fill="none" stroke="#fff" stroke-width=".8"><path d="M833 630 840 630 838 636ZM879 630 886 630 884 636ZM1032 716 1038 718 1035 711ZM1078 716 1084 718 1081 711ZM1032 850 1038 852 1035 845ZM1078 985 1084 987 1081 980ZM833 878 840 878 838 884ZM859 312H862V320H859ZM859 590H862V598H859ZM1053 760H1056V768H1053ZM1053 870H1056V878H1053ZM1100 712H1103V720H1100ZM1100 955H1103V963H1100Z"/></g>
<g class="dim">
 <text x="861" y="460">430</text><text x="855" y="315" style="font-size:12px">100</text><text x="934" y="679">450</text><text x="981" y="680">450</text>
 <text x="934" y="813" style="fill:#e4e4e4">450</text><text x="1055" y="822" style="fill:#e4e4e4">200</text><text x="1101" y="842">400</text><text x="958" y="937" style="fill:#e4e4e4">550</text><text x="815" y="817" style="fill:#e4e4e4;font-size:12px">100</text>
</g>

<path d="M695 775 655 788" stroke="#b8780f" stroke-width="2"/>
<path d="M640 792 657 781 659 791Z" fill="#c98a16"/><path d="M640 792 659 791 656 796Z" fill="#e5a840"/>
<circle cx="697" cy="775" r="5" fill="url(#ball)"/>

<path d="M297 1030 300 1036 303 1030M300 1036V1040" fill="none" stroke="#44c044" stroke-width="1.200"/>
<path d="M300 1041 306 1050H294Z" fill="#0c800c"/>

<!-- mini toolbar -->
<rect x="767" y="755" width="8" height="20" rx="3" fill="#c9c9c9"/>
<path d="M789 755H820V775H789A10 10 0 0 1 789 755Z" fill="url(#pill)" stroke="#999" stroke-width=".5"/>
<path d="M786.500 757V773M801.500 757V773" fill="none" stroke="#1b3a6a" stroke-width="1.500"/><path d="M788 765H800M788 765 791 762.500V767.500ZM800 765 797 762.500V767.500Z" fill="#222" stroke="#222" stroke-width=".6"/>
<path d="M806 762H815L810.500 768Z" fill="#333"/>
<path d="M915 755H923A10 10 0 0 1 923 775H915Z" fill="url(#pill)"/>
<path d="M922 760 928 765 922 770Z" fill="#111"/>
<rect x="820" y="755" width="8" height="20" fill="url(#pill)"/>
<rect x="827" y="755" width="92" height="19" fill="#fff" stroke="#e81a2c" stroke-width="5"/>
<text x="832" y="769" font-size="10.500" fill="#111">450</text>

<path d="M789 785H842A10 10 0 0 1 842 805H789A10 10 0 0 1 789 785Z" fill="url(#pill)" stroke="#999" stroke-width=".5"/>
<rect x="786" y="788" width="14" height="14" fill="none" stroke="#1e6a1e" stroke-dasharray="3 2"/>
<g fill="#1e6a1e"><rect x="785" y="787" width="3" height="3"/><rect x="798" y="787" width="3" height="3"/><rect x="785" y="800" width="3" height="3"/></g>
<path d="M794 792V803L797 800 799 804 800.500 803 799 800H802Z" fill="#fff" stroke="#111" stroke-width=".7"/>
<text x="804" y="799" font-size="12" fill="#333" letter-spacing="-.15">Profile</text>
<path d="M838.500 785V805" stroke="#888"/>
<path d="M840 792H849L844.500 798Z" fill="#333"/>

<path d="M789 815H887A10 10 0 0 1 887 835H789A10 10 0 0 1 789 815Z" fill="url(#pill)" stroke="#999" stroke-width=".5"/>
<path d="M818.500 815V835M857.500 815V835" stroke="#777"/>
<path d="M785 821 790 817H800V829L796 833H785Z" fill="#e8e8e8" stroke="#1b3a6a"/>
<path d="M804 822H813L808.500 828ZM842 822H851L846.500 828ZM881 822H890L885.500 828Z" fill="#333"/>
<path d="M824 826 831 820 837 823 835 831 828 833 824 830Z" fill="#fff" stroke="#2b4c80"/><path d="M824 830 829 826V833Z" fill="#e0503a"/><circle cx="837" cy="818" r="3" fill="#f09020"/>
<path d="M865 816 881 823V833L865 829Z" fill="#f4b483" stroke="#a85a20"/><path d="M864 835 874 826M864 835V830M864 835H869" stroke="#222" stroke-width="1.500" fill="none"/>

<path d="M789 845H808V865H789A10 10 0 0 1 789 845Z" fill="#a9c4e4" stroke="#7a94b4" stroke-width=".5"/>
<path d="M808 845H827A10 10 0 0 1 827 865H808Z" fill="url(#pill)" stroke="#999" stroke-width=".5"/>
<path d="M808.500 845V865" stroke="#666"/>
<path d="M786 855 790 859 798 850" fill="none" stroke="#0f6a2a" stroke-width="2.500"/>
<path d="M816 851 826 860M826 851 816 860" stroke="#b8202a" stroke-width="2"/>
<path d="M857 845H875A10 10 0 0 1 875 865H857A10 10 0 0 1 857 845Z" fill="url(#pill)" stroke="#999" stroke-width=".5"/>
<rect x="853" y="848" width="15" height="15" fill="#fff" stroke="#222"/><rect x="853" y="848" width="15" height="3" fill="#335"/><path d="M856 854H858M860 854H866M856 859H858M860 859H866" stroke="#2a6cc0"/>
<path d="M871 852H880L875.500 858Z" fill="#333"/>

<rect x="797" y="875" width="29" height="20" fill="#444" opacity=".55"/>
<rect x="795" y="873" width="29" height="20" fill="#f2f2f2"/>
<text x="808.500" y="887" font-size="12" fill="#222" text-anchor="middle">OK</text>

<rect x="1626" y="249" width="10" height="3" fill="#eee"/>
<rect x="1648" y="247" width="6" height="7" fill="none" stroke="#eee" stroke-width="2"/><path d="M1650 245H1657V251" fill="none" stroke="#bbb" stroke-width="1.300"/>
<path d="M1666 245 1674 254M1674 245 1666 254" stroke="#f0f0f0" stroke-width="2.200"/>

<!-- view cube -->
<ellipse cx="1617" cy="352" rx="32" ry="10" fill="#2e2e2e" opacity=".35"/>
<polygon points="1582,299 1618,292 1651,301 1613,311" fill="#767676"/>
<polygon points="1582,299 1613,311 1613,361 1584,337" fill="#707070"/>
<polygon points="1613,311 1651,301 1649,345 1613,361" fill="#717171"/>
<rect x="1606" y="309" width="14" height="10" fill="#80808a" opacity=".8"/>
<text x="0" y="0" font-size="8" fill="#555" transform="translate(1587,327) rotate(22) scale(.88,1.7)">FRONT</text>
<text x="0" y="0" font-size="8" fill="#555" transform="translate(1620,340) rotate(-20) scale(.95,1.7)">RIGHT</text>
<text x="1612" y="302" font-size="5" fill="#5a5a5a" text-anchor="middle">TOP</text>

<!-- nav bar -->
<rect x="1644" y="383" width="32" height="196" rx="5" fill="#707070" stroke="#9a9a9a"/>
<circle cx="1669" cy="389" r="3.500" fill="#8c8c8c"/><path d="M1667 387 1671 391M1671 387 1667 391" stroke="#444" stroke-width=".8"/>
<path d="M1650 404C1654 404 1669 404 1669 408V418C1669 425 1663 425 1660 425 1655 425 1650 421 1650 415Z" fill="#a8a8a8" stroke="#8c8c8c"/>
<circle cx="1659.500" cy="415" r="6.500" fill="#909090" stroke="#5e5e5e"/>
<path d="M1657 436H1662L1659.500 439ZM1657 498H1662L1659.500 501ZM1657 533H1662L1659.500 536Z" fill="#4f4f4f"/>
<path d="M1647 443.500H1673" stroke="#8a8a8a"/>
<path d="M1654 459C1652 454 1651 452 1652 451L1655 454V449L1657 448 1658 453 1659 447 1661 447 1661 453 1663 448 1664 449 1663 454 1666 450 1667 452 1664 460C1663 464 1657 465 1654 459Z" fill="#c0c0c0" stroke="#5a5a5a" stroke-width=".5"/>
<circle cx="1658" cy="480" r="5.500" fill="#b4b4b4" stroke="#5a5a5a"/><path d="M1662 484 1667 489" stroke="#5a5a5a" stroke-width="2"/>
<path d="M1660 505C1664 507 1668 511 1667 516 1664 519 1658 522 1656 520 1654 517 1654 510 1660 505Z" fill="none" stroke="#5f5f5f"/><path d="M1652 516H1668" stroke="#5f5f5f" stroke-dasharray="2 2"/>
<rect x="1653" y="547" width="14" height="9" fill="#9a9a9a" stroke="#545454"/><rect x="1656" y="550" width="8" height="3" fill="#777"/><path d="M1653 546 1658 542H1664L1665 546" fill="none" stroke="#555"/>
<circle cx="1669" cy="572" r="3.500" fill="#8c8c8c"/><path d="M1667 571H1671M1667.500 573H1670.500" stroke="#333" stroke-width=".8"/>

<!-- left panel -->
<rect x="0" y="237" width="247" height="813" fill="#f0f0f0"/>
<path d="M4 243.500H228M4 246.500H228" stroke="#999"/>
<path d="M235 243 239 248M239 243 235 248" stroke="#111" stroke-width="1.500"/>
<rect x="3" y="252" width="243" height="21" fill="#a9a9a9"/>
<text x="11" y="267" font-size="13" font-weight="700" fill="#f2f2f2">Model</text>
<path d="M52 261H60L56 265.500Z" fill="#f2f2f2"/>
<rect x="227" y="255" width="11" height="13" rx="1" fill="#fdf7c0" stroke="#222"/><text x="232.500" y="266" font-size="10" font-weight="700" fill="#111" text-anchor="middle">?</text>
<path d="M8 280H20L16 286V293L12 291V286Z" fill="#888" stroke="#222"/>
<path d="M28.500 277V294" stroke="#777"/>
<g fill="#111"><path d="M38 293V284L40 279H44V293ZM47 293V279H51L53 284V293Z"/><rect x="44" y="282" width="3" height="5"/></g>
<rect x="3.500" y="300.500" width="239" height="760" fill="#fff" stroke="#666"/>
<g class="tree">
 <text x="27" y="314">Part2</text><text x="47" y="332">View: Master</text><text x="47" y="350">Origin</text><text x="47" y="368">Sketch1</text><text x="47" y="386">End of Part</text>
</g>
<path d="M12.500 318V382.500H24M12.500 328.500H24M12.500 346.500H24M12.500 364.500H24" fill="none" stroke="#888"/>
<rect x="8.500" y="324.500" width="8" height="8" fill="#fff" stroke="#555"/><path d="M10.500 328.500H14.500M12.500 326.500V330.500" stroke="#111"/>
<rect x="8.500" y="342.500" width="8" height="8" fill="#fff" stroke="#555"/><path d="M10.500 346.500H14.500M12.500 344.500V348.500" stroke="#111"/>
<path d="M9 308 14 303H25V313L20 318H9Z" fill="#fbe27a" stroke="#9a5a10"/><path d="M9 308H20V318M20 308 25 303" fill="none" stroke="#9a5a10"/>
<path d="M30 321H34M30 321V336H33M31 327H36V332M38 327H44M38 332H42" fill="none" stroke="#2a3a5a" stroke-width="1.500"/>
<path d="M28 340V338H36L38 340H44V353H28Z" fill="#f6dca2" stroke="#8e7a50"/>
<rect x="28" y="356" width="16" height="16" fill="#eef" stroke="#123"/><path d="M31 359V369H41" fill="none" stroke="#123"/><path d="M34 366 41 358 43 360 36 368Z" fill="#ecc24c"/>
<path d="M32 375H40L44 379V386L40 390H32L28 386V379Z" fill="#e23b3b" stroke="#8a1a1a"/><path d="M33 379 39 386M39 379 33 386" stroke="#fff" stroke-width="2"/>

<!-- extrude dialog -->
<rect x="242" y="230" width="335" height="53" fill="#efefef" stroke="#d0d0d0"/>
<text x="408.700" y="251" font-size="15" fill="#333" text-anchor="middle">Extrude</text>
<rect x="539" y="230" width="31" height="21" fill="#bdbdbd"/>
<path d="M551 237 559 244M559 237 551 244" stroke="#fff" stroke-width="1.500"/>
<rect x="248.500" y="260.500" width="321" height="16" fill="#ebebeb" stroke="#d2d2d2"/>
<path d="M404 267H414L409 276Z" fill="#111"/>
</svg>
</body></html>
